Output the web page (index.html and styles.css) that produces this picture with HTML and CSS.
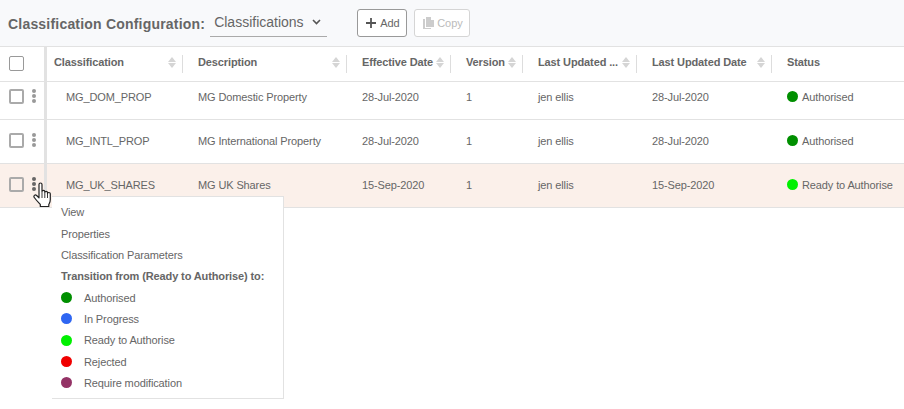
FILE: index.html
```html
<!DOCTYPE html>
<html lang="en">
<head>
  <meta charset="UTF-8">
  <meta name="viewport" content="width=device-width, initial-scale=1.0">
  <title>Classification Configuration</title>
  <link rel="stylesheet" href="styles.css">
</head>
<body>
  <div class="toolbar">
    <span class="page-title">Classification Configuration:</span>
    <div class="picker">
      <span>Classifications</span>
      <svg class="chevron" width="9" height="6" viewBox="0 0 9 6"><path d="M1 1l3.500 3.500L8 1" fill="none" stroke="#555" stroke-width="1.600"/></svg>
    </div>
    <button class="btn btn-add">
      <svg width="10" height="10" viewBox="0 0 10 10"><path d="M5 0v10M0 5h10" stroke="#555" stroke-width="1.800"/></svg>
      Add
    </button>
    <button class="btn btn-off">
      <svg width="11" height="12" viewBox="0 0 11 12"><path d="M3 0h5v3h3v7H3z" fill="#ccc"/><path d="M0 2h2v9h6v1H0z" fill="#ccc"/></svg>
      Copy
    </button>
  </div>

  <div class="grid-wrap">
    <div class="row head">
      <div class="sel"><span class="check"></span></div>
      <div class="th"><span class="th-label">Classification</span><span class="sort"></span></div>
      <div class="th"><span class="th-label">Description</span><span class="sort"></span></div>
      <div class="th"><span class="th-label">Effective Date</span><span class="sort"></span></div>
      <div class="th"><span class="th-label">Version</span><span class="sort"></span></div>
      <div class="th"><span class="th-label">Last Updated ...</span><span class="sort"></span></div>
      <div class="th"><span class="th-label">Last Updated Date</span><span class="sort"></span></div>
      <div class="th th-last"><span class="th-label">Status</span></div>
    </div>

    <div class="row body-row short">
      <div class="sel"><span class="check"></span><span class="dots"><i></i><i></i><i></i></span></div>
      <div class="td code">MG_DOM_PROP</div>
      <div class="td">MG Domestic Property</div>
      <div class="td">28-Jul-2020</div>
      <div class="td">1</div>
      <div class="td">jen ellis</div>
      <div class="td">28-Jul-2020</div>
      <div class="td status"><span class="dot authorised"></span>Authorised</div>
    </div>

    <div class="row body-row">
      <div class="sel"><span class="check"></span><span class="dots"><i></i><i></i><i></i></span></div>
      <div class="td code">MG_INTL_PROP</div>
      <div class="td">MG International Property</div>
      <div class="td">28-Jul-2020</div>
      <div class="td">1</div>
      <div class="td">jen ellis</div>
      <div class="td">28-Jul-2020</div>
      <div class="td status"><span class="dot authorised"></span>Authorised</div>
    </div>

    <div class="row body-row active">
      <div class="sel"><span class="check"></span><span class="dots dots-dark"><i></i><i></i><i></i></span></div>
      <div class="td code">MG_UK_SHARES</div>
      <div class="td">MG UK Shares</div>
      <div class="td">15-Sep-2020</div>
      <div class="td">1</div>
      <div class="td">jen ellis</div>
      <div class="td">15-Sep-2020</div>
      <div class="td status"><span class="dot ready"></span>Ready to Authorise</div>
    </div>

    <div class="menu">
      <div class="menu-item">View</div>
      <div class="menu-item">Properties</div>
      <div class="menu-item">Classification Parameters</div>
      <div class="menu-item menu-head">Transition from (Ready to Authorise) to:</div>
      <div class="menu-item state"><span class="dot authorised"></span>Authorised</div>
      <div class="menu-item state"><span class="dot progress"></span>In Progress</div>
      <div class="menu-item state"><span class="dot ready"></span>Ready to Authorise</div>
      <div class="menu-item state"><span class="dot rejected"></span>Rejected</div>
      <div class="menu-item state"><span class="dot modify"></span>Require modification</div>
    </div>

    <svg class="cursor" width="20" height="26" viewBox="0 0 20 26">
      <path d="M6 2.500c0-2 3-2 3 0v7c0-1.500 2.800-1.500 2.800 0v1c0-1.500 2.700-1.500 2.700 0v1c0-1.400 2.800-1.400 2.800.3v5.700c0 2.500-.8 3.500-1.500 5v2H7.300v-2C5.500 20.500 3.500 18.500 1.300 15.500c-1.200-1.700.8-3.300 2.300-2l2.400 2.300z" fill="#fff" stroke="#222" stroke-width="1.200" stroke-linejoin="round"/>
      <path d="M9 10v6M11.800 11v5M14.500 12v4" stroke="#222" stroke-width=".9"/>
    </svg>
  </div>
</body>
</html>
```

FILE: styles.css
```css
body {
  font-family: "Liberation Sans", Arial, sans-serif;
  margin: 0;
  padding: 0;
  background-color: #fff;
  color: #666;
  font-size: 11px;
  letter-spacing: -.12px;
  min-height: 409px;
}

.toolbar {
  display: flex;
  align-items: flex-start;
  height: 46px;
  padding-left: 8px;
  background-color: #f8f9fb;
  border-bottom: 1px solid #e2e2e2;
}

.page-title {
  margin-top: 16px;
  font-size: 14px;
  line-height: 16px;
  font-weight: bold;
  letter-spacing: .2px;
  white-space: nowrap;
}

.picker {
  display: flex;
  align-items: center;
  gap: 8px;
  box-sizing: border-box;
  width: 117px;
  height: 29px;
  margin: 8px 0 0 5px;
  padding-left: 4px;
  border-bottom: 1px solid #aaa;
  font-size: 14px;
  letter-spacing: 0;
}

.btn {
  display: flex;
  align-items: center;
  gap: 3px;
  box-sizing: border-box;
  height: 28px;
  margin: 9px 0 0 7px;
  padding: 0 8px;
  background: #fff;
  border: 1px solid #999;
  border-radius: 3px;
  font-family: inherit;
  font-size: 11px;
  color: #666;
}

.btn-add {
  gap: 4px;
  width: 50px;
  padding-right: 0;
  margin-left: 30px;
}

.btn-off {
  padding-right: 6px;
  border-color: #d5d5d5;
  color: #bbb;
}

.grid-wrap {
  position: relative;
  min-height: 362px;
}

.row {
  display: grid;
  grid-template-columns: 47px 143px 164px 104px 72px 114px 135px 125px;
  border-bottom: 1px solid #e2e2e2;
}

.head {
  height: 34px;
}

.body-row {
  height: 43px;
}

.short {
  height: 37px;
}

.active {
  background-color: #fbf0ea;
}

.sel {
  display: flex;
  align-items: center;
  box-sizing: border-box;
  padding: 0 0 2px 9px;
  border-right: 3px solid #e2e2e2;
}

.short .sel,
.short .td {
  padding-bottom: 8px;
}

.check {
  display: block;
  box-sizing: border-box;
  width: 15px;
  height: 15px;
  border: 2px solid #aaa;
  border-radius: 2px;
  background: #fff;
}

.head .check {
  border-color: #999;
  border-width: 1.500px;
}

.active .check {
  background: transparent;
}

.dots {
  display: flex;
  flex-direction: column;
  gap: 1px;
  margin-left: 8px;
  margin-top: -2px;
}

.dots i {
  display: block;
  width: 4px;
  height: 4px;
  border-radius: 50%;
  background: #999;
}

.dots-dark i {
  background: #666;
}

.th {
  position: relative;
  display: flex;
  align-items: center;
  box-sizing: border-box;
  margin: 0 7px 0 8px;
  padding: 0 6px 4px 0;
  font-weight: bold;
}

.head .th:nth-child(2) {
  margin-left: 7px;
}

.th::after {
  content: "";
  position: absolute;
  right: 0;
  top: 8px;
  bottom: 8px;
  width: 1px;
  background: #ddd;
}

.th-last::after {
  display: none;
}

.th-label {
  flex: 1;
  white-space: nowrap;
}

.sort {
  position: relative;
  display: block;
  width: 9px;
  height: 11px;
}

.sort::before,
.sort::after {
  content: "";
  position: absolute;
  left: 0;
  border-left: 4.500px solid transparent;
  border-right: 4.500px solid transparent;
}

.sort::before {
  top: 0;
  border-bottom: 5px solid #d5d5d5;
}

.sort::after {
  bottom: 0;
  border-top: 5px solid #d5d5d5;
}

.td {
  display: flex;
  align-items: center;
  padding: 0 0 2px 8px;
  white-space: nowrap;
}

.code {
  padding-left: 19px;
}

.status {
  gap: 4px;
}

.dot {
  display: inline-block;
  width: 11px;
  height: 11px;
  border-radius: 50%;
}

.authorised { background: #008f00; }
.progress { background: #2f66f2; }
.ready { background: #00f000; }
.rejected { background: #f00000; }
.modify { background: #943366; }

.menu {
  position: absolute;
  left: 52px;
  top: 149px;
  box-sizing: border-box;
  width: 232px;
  height: 203px;
  padding: 4.500px 0 0 9px;
  background: #fff;
  border-top: 1px solid #e2e2e2;
  border-right: 1px solid #e2e2e2;
  border-bottom: 1px solid #e2e2e2;
}

.menu-item {
  display: flex;
  align-items: center;
  height: 21.350px;
  white-space: nowrap;
}

.menu-head {
  font-weight: bold;
}

.state .dot {
  margin-right: 12px;
}

.cursor {
  position: absolute;
  left: 33px;
  top: 135px;
}
```
